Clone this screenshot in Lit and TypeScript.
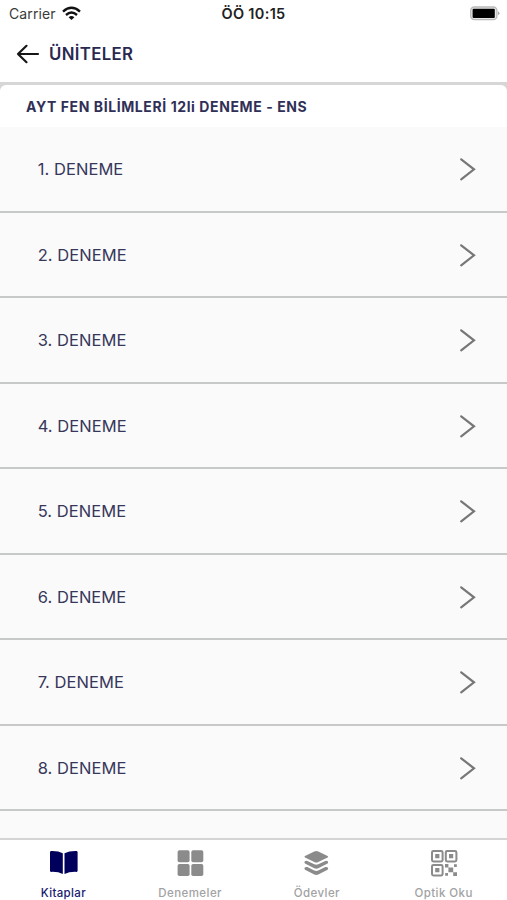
import { LitElement, html, svg, css } from "lit";
import { customElement, property } from "lit/decorators.js";

const icons: Record<string, unknown> = {
  book: svg`<path d="M2 4.2Q2 3 3.4 3Q10.3 2.8 14.8 5.3V26Q10.3 23.6 3 23.9Q2 23.9 2 22.8Z"/><path d="M29.6 4.2Q29.6 3 28.2 3Q21.3 2.8 16.5 5.3V26Q21.3 23.6 28.6 23.9Q29.6 23.9 29.6 22.8Z"/>`,
  grid: svg`<rect x="2.6" y="2.2" width="12" height="12" rx="1.8"/><rect x="16.3" y="2.2" width="12" height="12" rx="1.8"/><rect x="2.6" y="16" width="12" height="12" rx="1.8"/><rect x="16.3" y="16" width="12" height="12" rx="1.8"/>`,
  layers: svg`<g transform="translate(-.7 0)"><path d="M15 3Q15.8 3 17 3.5L26.3 7.9Q27.5 8.7 26.3 9.5L17 13.9Q15 14.9 13 13.9L3.7 9.5Q2.5 8.7 3.7 7.9L13 3.5Q14.2 3 15 3Z"/><path d="M3.5 13.2Q4.6 12.5 6 12.9L13 16.2Q15 17.1 17 16.2L24 12.9Q25.4 12.5 26.5 13.2Q27.4 14.5 26.3 15.6L17 20.3Q15 21.2 13 20.3L3.7 15.6Q2.6 14.5 3.5 13.2Z"/><path d="M3.5 19.4Q4.6 18.7 6 19.1L13 22.5Q15 23.4 17 22.5L24 19.1Q25.4 18.7 26.5 19.4Q27.4 20.7 26.3 21.8L17 26.5Q15 27.4 13 26.5L3.7 21.8Q2.6 20.7 3.5 19.4Z"/></g>`,
  qr: svg`<g fill="none" stroke="currentColor" stroke-width="2"><rect x="3" y="3" width="10.6" height="10.4" rx="1.4"/><rect x="16.8" y="3" width="10.6" height="10.4" rx="1.4"/><rect x="3" y="17" width="10.6" height="10.4" rx="1.4"/></g><path d="M6.2 6.1h4.2v4.2H6.2zM20 6.1h4.2v4.2H20zM6.2 20.1h4.2v4.2H6.2zM16 16h3.4v3.4H16zM19.4 19.4h4.8v4.8h-4.8zM25 16.2h2.8v2.8H25zM16.2 25h2.8v2.8h-2.8zM24.2 24.2H28V28h-3.8z"/>`,
};

@customElement("unit-row")
class UnitRow extends LitElement {
  @property() label = "";

  static styles = css`
    :host {
      box-sizing: border-box;
      flex: none;
      height: 85.5px;
      display: flex;
      align-items: center;
      justify-content: space-between;
      padding: 1px 30px 0 37.7px;
      border-bottom: 2px solid #c7c8c8;
      background: #fafafa;
      color: #37375a;
      font-size: 16.5px;
      letter-spacing: 0.06px;
    }
    .chevron {
      width: 19px;
      height: 26px;
      fill: none;
      stroke: #777;
      stroke-width: 2.2;
      stroke-linecap: round;
      stroke-linejoin: miter;
    }
  `;

  render() {
    return html`<span>${this.label}</span>
      <svg class="chevron" viewBox="0 0 19 26"><path d="M3.2 3.3L16 13.3L3.2 23.3" /></svg>`;
  }
}

@customElement("tab-item")
class TabItem extends LitElement {
  @property() label = "";
  @property() icon = "";

  static styles = css`
    :host {
      flex: 1 1 0;
      min-width: 0;
      display: flex;
      flex-direction: column;
      align-items: center;
      padding-top: 8px;
      color: #a2a2a4;
      font-size: 11.5px;
      font-weight: 500;
      letter-spacing: 0.43px;
    }
    :host([active]) {
      color: #1a1a70;
      letter-spacing: 0.35px;
    }
    .icon {
      width: 30px;
      height: 30px;
      fill: currentColor;
      color: #8b8b8b;
    }
    :host([active]) .icon {
      color: #00005c;
    }
    .label {
      margin-top: 8px;
      line-height: 14px;
    }
  `;

  render() {
    return html`<svg class="icon" viewBox="0 0 30 30">${icons[this.icon]}</svg>
      <span class="label">${this.label}</span>`;
  }
}

@customElement("app-root")
class AppRoot extends LitElement {
  static styles = css`
    :host {
      display: flex;
      flex-direction: column;
      height: 900px;
      overflow: hidden;
      background: #fff;
      font-family: Inter, "Liberation Sans", sans-serif;
    }
    .status {
      flex: none;
      height: 28px;
      display: grid;
      grid-template-columns: 1fr auto 1fr;
      align-items: center;
      padding: 0 7px 0 9px;
      font-size: 14px;
      color: #222;
    }
    .carrier {
      display: flex;
      align-items: center;
      gap: 6px;
      margin-top: -1px;
      color: #3a3a3a;
      letter-spacing: 0.12px;
    }
    .wifi {
      width: 19px;
      height: 15px;
      margin-top: -1px;
    }
    .clock {
      font-weight: 600;
      font-size: 14.5px;
      letter-spacing: 0.32px;
      margin-right: 2px;
      margin-top: -1px;
    }
    .battery {
      justify-self: end;
      width: 31px;
      height: 16px;
      margin-top: -3px;
    }
    .nav {
      flex: none;
      height: 54px;
      display: flex;
      align-items: center;
      gap: 9px;
      padding-left: 16px;
      box-sizing: border-box;
      padding-bottom: 2px;
    }
    .back {
      width: 24px;
      height: 22px;
      fill: none;
      stroke: #161616;
      stroke-width: 2.2;
      stroke-linecap: round;
      stroke-linejoin: round;
    }
    .title {
      font-size: 16.8px;
      font-weight: 600;
      letter-spacing: 0.35px;
      color: #292950;
    }
    .card {
      flex: none;
      background: #d6d6d6;
      padding-top: 3px;
    }
    .heading {
      height: 42px;
      box-sizing: border-box;
      padding: 1px 26px 0;
      display: flex;
      align-items: center;
      border-radius: 6px 6px 0 0;
      background: #fff;
      font-size: 14px;
      font-weight: 700;
      letter-spacing: 0.59px;
      color: #303057;
      white-space: pre;
    }
    .list {
      flex: 1;
      min-height: 0;
      overflow: hidden;
      display: flex;
      flex-direction: column;
      background: #fafafa;
    }
    .tabs {
      flex: none;
      box-sizing: border-box;
      height: 62px;
      display: flex;
      border-top: 2px solid #d4d4d4;
    }
  `;

  render() {
    return html`
      <div class="status">
        <div class="carrier">
          <span>Carrier</span>
          <svg class="wifi" viewBox="0 0 19 15" fill="none" stroke="#111" stroke-width="2.4">
            <path d="M1 5.6Q9.5 -2 18 5.6" />
            <path d="M4 9Q9.5 4.2 15 9" />
            <path d="M6.6 11.2Q9.5 8.6 12.4 11.2L9.5 14Z" fill="#111" stroke="none" />
          </svg>
        </div>
        <span class="clock">ÖÖ 10:15</span>
        <svg class="battery" viewBox="0 0 31 16">
          <rect x="1.7" y="2" width="26.2" height="12.6" rx="3.6" fill="#e8e8e8" stroke="#b9b9b9" stroke-width="1.3" />
          <rect x="3.6" y="3.8" width="22.2" height="9.2" rx="1" />
          <path d="M29 6.2Q32 8.2 29 10.2Z" fill="#aaa" />
        </svg>
      </div>
      <div class="nav">
        <svg class="back" viewBox="0 0 24 22"><path d="M22 11H2M10.5 2.8L2 11L10.5 19.2" /></svg>
        <span class="title">ÜNİTELER</span>
      </div>
      <div class="card"><div class="heading">AYT FEN BİLİMLERİ 12li DENEME - ENS</div></div>
      <div class="list">
        ${[1, 2, 3, 4, 5, 6, 7, 8].map((n) => html`<unit-row label="${n}. DENEME"></unit-row>`)}
      </div>
      <div class="tabs">
        <tab-item active label="Kitaplar" icon="book"></tab-item>
        <tab-item label="Denemeler" icon="grid"></tab-item>
        <tab-item label="Ödevler" icon="layers"></tab-item>
        <tab-item label="Optik Oku" icon="qr"></tab-item>
      </div>
    `;
  }
}
